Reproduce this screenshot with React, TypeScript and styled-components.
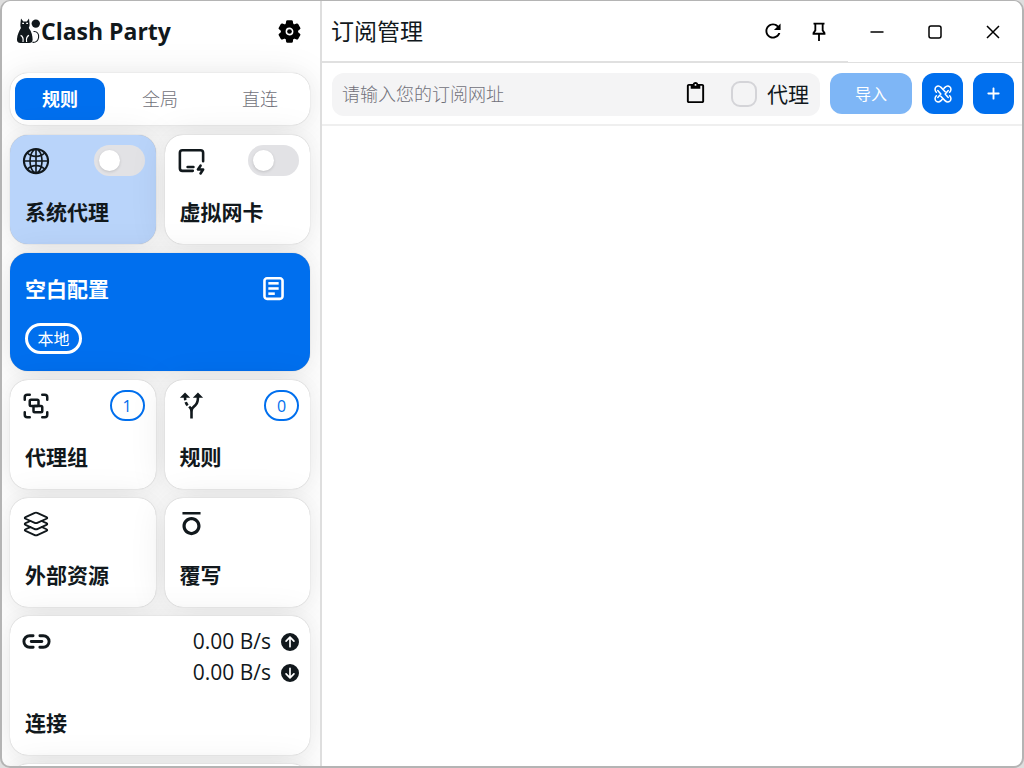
import React, { useState } from 'react'
import styled, { createGlobalStyle, css } from 'styled-components'
import { IoSettings, IoLayersOutline, IoLink } from 'react-icons/io5'
import { AiOutlineGlobal } from 'react-icons/ai'
import { TbDeviceIpadHorizontalBolt } from 'react-icons/tb'
import { CgLoadbarDoc } from 'react-icons/cg'
import { LuGroup } from 'react-icons/lu'
import { MdOutlineAltRoute, MdFormatOverline, MdContentPaste } from 'react-icons/md'
import { FaCircleArrowUp, FaCircleArrowDown, FaPlus } from 'react-icons/fa6'
import { IoMdRefresh } from 'react-icons/io'
import { RiPushpin2Line } from 'react-icons/ri'

const blue = '#006fee'
const ink = '#11181c'

const GlobalStyle = createGlobalStyle`
  * { box-sizing: border-box; }
  html, body, #root { height: 100%; }
  body {
    margin: 0;
    background: #dedede;
    color: ${ink};
    font-family: 'Open Sans', 'Noto Sans CJK SC', sans-serif;
    overflow: hidden;
  }
  button, input { font: inherit; color: inherit; }
  button { border: 0; padding: 0; background: none; cursor: pointer; }
  svg { display: block; flex: none; }
`

const Window = styled.div`
  display: flex;
  height: 100vh;
  overflow: hidden;
  border: 2px solid #b4b4b4;
  border-top-width: 1px;
  border-radius: 10px;
  background: #fff;
`

const Sidebar = styled.aside`
  flex: none;
  display: flex;
  flex-direction: column;
  width: 320px;
  border-right: 2px solid #dedede;
  overflow: hidden;
`

const Brand = styled.header`
  flex: none;
  display: flex;
  align-items: center;
  height: 60px;
  padding: 0 18px 0 14px;
`

const BrandName = styled.h1`
  flex: 1;
  margin: 0;
  font-size: 23px;
  line-height: 32px;
  font-weight: 700;
`

const IconButton = styled.button<{ $light?: boolean }>`
  display: grid;
  place-items: center;
  color: ${(p) => (p.$light ? '#fff' : '#000')};
`

const CardGrid = styled.div`
  display: grid;
  grid-template-columns: 1fr 1fr;
  gap: 9px;
  padding: 12px 10px 0 8px;
`

const cardSurface = css`
  border-radius: 18px;
  background: #fff;
  box-shadow: 0 0 19px rgba(0, 0, 0, 0.03), 0 3px 38px rgba(0, 0, 0, 0.09), 0 0 1px rgba(0, 0, 0, 0.3);
`

const Tabs = styled.div`
  ${cardSurface}
  grid-column: 1 / -1;
  display: flex;
  gap: 10px;
  height: 52px;
  padding: 5px;
  margin-bottom: 1px;
`

const Tab = styled.button<{ $active: boolean }>`
  flex: 1;
  border-radius: 12px;
  font-size: 18px;
  line-height: 26px;
  color: ${(p) => (p.$active ? '#fff' : '#71717a')};
  font-weight: ${(p) => (p.$active ? 700 : 300)};
  background: ${(p) => (p.$active ? blue : 'transparent')};
`

const Card = styled.section<{ $tone?: 'soft' | 'solid'; $wide?: boolean }>`
  ${cardSurface}
  display: flex;
  flex-direction: column;
  justify-content: space-between;
  padding: 10px 11px 17px 11px;
  min-height: 109px;
  ${(p) => p.$wide && 'grid-column: 1 / -1;'}
  ${(p) => p.$tone === 'soft' && 'background: #b9d4fa;'}
  ${(p) => p.$tone === 'solid' && `background: ${blue}; color: #fff; min-height: 118px; padding: 20px 21px 17px 15px;`}
`

const ConnectionCard = styled(Card)`
  min-height: 139px;
`

const CardTop = styled.div`
  display: flex;
  align-items: flex-start;
  justify-content: space-between;
`

const CardIcon = styled.span`
  display: grid;
  place-items: center;
  width: 30px;
  height: 31px;
`

const CardTitle = styled.h2<{ $inset?: boolean }>`
  margin: 0;
  padding-left: ${(p) => (p.$inset ? '4px' : '0')};
  font-size: 21px;
  line-height: ${(p) => (p.$inset ? '30px' : '32px')};
  font-weight: 700;
`

const Switch = styled.input`
  appearance: none;
  width: 51px;
  height: 31px;
  margin: 0;
  padding: 5px;
  border-radius: 16px;
  background: #e2e2e5;
  cursor: pointer;
  &::before {
    content: '';
    display: block;
    width: 21px;
    height: 21px;
    border-radius: 50%;
    background: #fff;
    box-shadow: 0 1px 3px rgba(0, 0, 0, 0.15);
  }
  &:checked { background: ${blue}; }
  &:checked::before { margin-left: auto; }
`

const Chip = styled.span<{ $light?: boolean }>`
  display: inline-flex;
  align-items: center;
  justify-content: center;
  align-self: flex-start;
  height: 31px;
  min-width: ${(p) => (p.$light ? '57px' : '35px')};
  border: ${(p) => (p.$light ? '3px solid #fff' : `2px solid ${blue}`)};
  border-radius: 16px;
  font-size: 16px;
  line-height: 24px;
  color: ${(p) => (p.$light ? '#fff' : blue)};
`

const Speeds = styled.div`
  display: flex;
  flex-direction: column;
`

const Speed = styled.div`
  display: flex;
  align-items: center;
  justify-content: flex-end;
  gap: 10px;
  font-size: 21px;
  line-height: 31px;
`

const Main = styled.main`
  flex: 1;
  min-width: 0;
  display: flex;
  flex-direction: column;
`

const TitleBar = styled.header`
  display: flex;
  height: 62px;
`

const PageHead = styled.div`
  flex: 1;
  display: flex;
  align-items: center;
  gap: 24px;
  padding-right: 18px;
  padding-left: 9px;
  border-bottom: 2px solid #e0e0e0;
`

const PageTitle = styled.h2`
  flex: 1;
  margin: 0;
  font-size: 23px;
  line-height: 32px;
  font-weight: 400;
`

const WindowControls = styled.div`
  display: flex;
  border-bottom: 1px solid #e0e0e0;
`

const WindowButton = styled.button`
  display: grid;
  place-items: center;
  width: 58px;
`

const Toolbar = styled.form`
  display: flex;
  align-items: flex-start;
  gap: 10px;
  padding: 10px 8px 8px 10px;
  border-bottom: 2px solid #efefef;
`

const Field = styled.div`
  flex: 1;
  display: flex;
  align-items: center;
  height: 43px;
  padding: 0 11px 2px 10px;
  border-radius: 12px;
  background: #f4f4f5;
`

const UrlInput = styled.input`
  flex: 1;
  min-width: 0;
  border: 0;
  padding: 0;
  outline: 0;
  background: none;
  font-size: 18px;
  line-height: 26px;
  &::placeholder { color: #71717a; opacity: 1; font-weight: 300; }
`

const ProxyOption = styled.label`
  display: flex;
  align-items: center;
  gap: 10px;
  margin-left: 24px;
  font-size: 21px;
  line-height: 30px;
`

const Checkbox = styled.input`
  appearance: none;
  width: 26px;
  height: 26px;
  margin: 0;
  border: 2px solid #d4d4d8;
  border-radius: 9px;
  &:checked { background: ${blue}; border-color: ${blue}; }
`

const ActionButton = styled.button<{ $wide?: boolean }>`
  display: grid;
  place-items: center;
  width: ${(p) => (p.$wide ? '82px' : '41px')};
  height: 41px;
  border-radius: 12px;
  background: ${blue};
  color: #fff;
  font-size: 16px;
  line-height: 24px;
  &:disabled { opacity: 0.5; color: #fff; }
`

const CatLogo = () => (
  <svg width="25" height="26" viewBox="0 0 25 26" fill={ink} aria-hidden="true">
    <path d="M5 0.6 L7.3 3.4 H10.8 L13 0.6 L13.6 6.2 C13.8 8 13 9 12.8 10 C15.6 13.5 16.6 18 16.6 21.5 C16.6 24.2 15.4 25 13 25 H4.6 C1.9 25 0.8 23.8 1 21 C1.3 16.5 3.2 13 5 10 C4.6 8.8 4.2 8 4.4 6 Z" />
    <circle cx="19.8" cy="5.6" r="4.2" />
    <path d="M17.5 13.5 C21 13 23.2 16 22.6 19.5 C22 23 19.5 24.6 16.5 24.4" fill="none" stroke={ink} strokeWidth="1.1" />
    <path d="M6.2 5.4 h1.8 M10.2 5.4 h1.8" stroke="#fff" strokeWidth="1.2" />
    <path d="M4.6 17.4 C6.8 18.4 7.6 20.6 7 24 M13 17.4 C10.8 18.4 10 20.6 10.6 24" fill="none" stroke="#fff" strokeWidth="1.2" />
  </svg>
)

const SubStoreIcon = () => (
  <svg width="18" height="18" viewBox="0 0 20 20" fill="none" stroke="currentColor" strokeWidth="1.7" strokeLinecap="round" strokeLinejoin="round" aria-hidden="true">
    <path d="M2.6 8 C0.8 6.2 0.8 3.6 2.2 2.2 C3.8 0.8 6.2 1 7.8 2.6 L12.4 7.4" />
    <path d="M17.4 8 C19.2 6.2 19.2 3.6 17.8 2.2 C16.2 0.8 13.8 1 12.2 2.6 L11 4" />
    <path d="M17.4 12 C19.2 13.8 19.2 16.4 17.8 17.8 C16.2 19.2 13.8 19 12.2 17.4 L7.6 12.6" />
    <path d="M2.6 12 C0.8 13.8 0.8 16.4 2.2 17.8 C3.8 19.2 6.2 19 7.8 17.4 L9 16" />
    <path d="M4.2 6.2 L7.6 10 L4.2 13.8 M15.8 6.2 L12.4 10 L15.8 13.8" />
  </svg>
)

const modes = ['规则', '全局', '直连']

export default function App() {
  const [mode, setMode] = useState(modes[0])
  const [url, setUrl] = useState('')
  return (
    <>
      <GlobalStyle />
      <Window>
        <Sidebar>
          <Brand>
            <CatLogo />
            <BrandName>Clash Party</BrandName>
            <IconButton aria-label="设置"><IoSettings size={25} /></IconButton>
          </Brand>
          <CardGrid>
            <Tabs role="tablist">
              {modes.map((m) => (
                <Tab key={m} role="tab" aria-selected={m === mode} $active={m === mode} onClick={() => setMode(m)}>{m}</Tab>
              ))}
            </Tabs>
            <Card $tone="soft">
              <CardTop>
                <CardIcon><AiOutlineGlobal size={30} /></CardIcon>
                <Switch type="checkbox" role="switch" aria-label="系统代理" />
              </CardTop>
              <CardTitle $inset>系统代理</CardTitle>
            </Card>
            <Card>
              <CardTop>
                <CardIcon><TbDeviceIpadHorizontalBolt size={31} /></CardIcon>
                <Switch type="checkbox" role="switch" aria-label="虚拟网卡" />
              </CardTop>
              <CardTitle $inset>虚拟网卡</CardTitle>
            </Card>
            <Card $tone="solid" $wide>
              <CardTop>
                <CardTitle>空白配置</CardTitle>
                <IconButton $light aria-label="查看配置"><CgLoadbarDoc size={31} /></IconButton>
              </CardTop>
              <Chip $light>本地</Chip>
            </Card>
            <Card>
              <CardTop>
                <CardIcon><LuGroup size={30} /></CardIcon>
                <Chip>1</Chip>
              </CardTop>
              <CardTitle $inset>代理组</CardTitle>
            </Card>
            <Card>
              <CardTop>
                <CardIcon><MdOutlineAltRoute size={31} /></CardIcon>
                <Chip>0</Chip>
              </CardTop>
              <CardTitle $inset>规则</CardTitle>
            </Card>
            <Card>
              <CardTop><CardIcon><IoLayersOutline size={30} /></CardIcon></CardTop>
              <CardTitle $inset>外部资源</CardTitle>
            </Card>
            <Card>
              <CardTop><CardIcon><MdFormatOverline size={31} /></CardIcon></CardTop>
              <CardTitle $inset>覆写</CardTitle>
            </Card>
            <ConnectionCard $wide>
              <CardTop>
                <CardIcon><IoLink size={31} /></CardIcon>
                <Speeds>
                  <Speed>0.00 B/s <FaCircleArrowUp size={18} /></Speed>
                  <Speed>0.00 B/s <FaCircleArrowDown size={18} /></Speed>
                </Speeds>
              </CardTop>
              <CardTitle $inset>连接</CardTitle>
            </ConnectionCard>
            <ConnectionCard $wide />
          </CardGrid>
        </Sidebar>
        <Main>
          <TitleBar>
            <PageHead>
              <PageTitle>订阅管理</PageTitle>
              <IconButton aria-label="刷新"><IoMdRefresh size={22} /></IconButton>
              <IconButton aria-label="置顶"><RiPushpin2Line size={22} /></IconButton>
            </PageHead>
            <WindowControls>
              <WindowButton aria-label="最小化">
                <svg width="14" height="14" viewBox="0 0 14 14" stroke="#000" strokeWidth="1.5"><path d="M0.5 7 H13.5" /></svg>
              </WindowButton>
              <WindowButton aria-label="最大化">
                <svg width="14" height="14" viewBox="0 0 14 14" fill="none" stroke="#000" strokeWidth="1.5"><rect x="1" y="1" width="12" height="12" rx="2" /></svg>
              </WindowButton>
              <WindowButton aria-label="关闭">
                <svg width="14" height="14" viewBox="0 0 14 14" stroke="#000" strokeWidth="1.5"><path d="M1 1 L13 13 M13 1 L1 13" /></svg>
              </WindowButton>
            </WindowControls>
          </TitleBar>
          <Toolbar onSubmit={(e) => e.preventDefault()}>
            <Field>
              <UrlInput aria-label="订阅网址" placeholder="请输入您的订阅网址" value={url} onChange={(e) => setUrl(e.target.value)} />
              <IconButton type="button" aria-label="粘贴"><MdContentPaste size={23} /></IconButton>
              <ProxyOption><Checkbox type="checkbox" />代理</ProxyOption>
            </Field>
            <ActionButton $wide disabled={!url}>导入</ActionButton>
            <ActionButton type="button" aria-label="Sub-Store"><SubStoreIcon /></ActionButton>
            <ActionButton type="button" aria-label="新建"><FaPlus size={15} /></ActionButton>
          </Toolbar>
        </Main>
      </Window>
    </>
  )
}
